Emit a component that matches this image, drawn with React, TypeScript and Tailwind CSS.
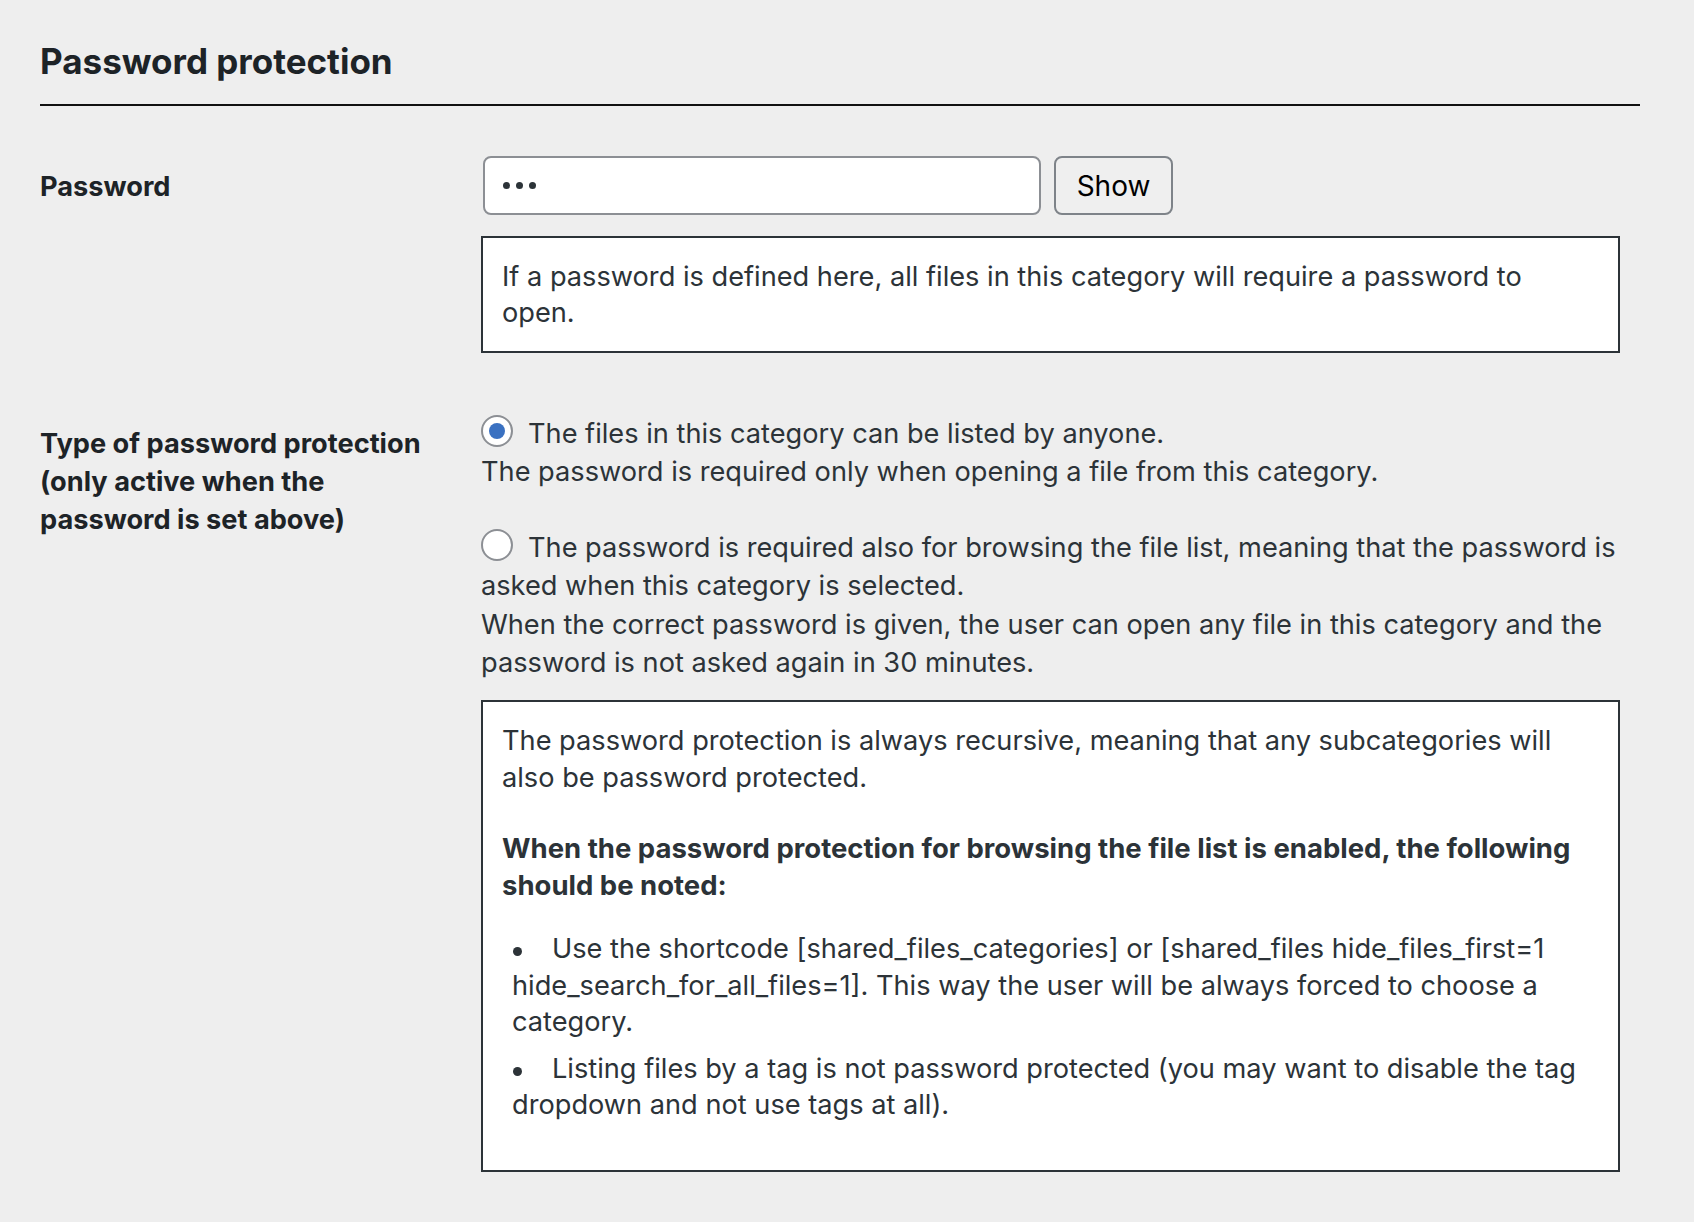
import React from "react";

function Radio({ checked }: { checked?: boolean }) {
  return (
    <span className="relative mr-[15px] inline-block size-[32px] rounded-full border-2 border-[#8c8f94] bg-white align-[-4px]">
      {checked && (
        <span className="absolute left-1/2 top-1/2 size-[16px] -translate-x-1/2 -translate-y-1/2 rounded-full bg-[#3a71c1]" />
      )}
    </span>
  );
}

function Line({ children }: { children: React.ReactNode }) {
  return <span className="block whitespace-nowrap">{children}</span>;
}

function Bullet() {
  return (
    <span className="inline-block w-[40px]">
      <span className="ml-[1px] inline-block size-[9px] rounded-full bg-[#2c3338] align-[2px]" />
    </span>
  );
}

export default function App() {
  return (
    <div className="min-h-screen bg-[#eeeeee] font-['Inter',sans-serif] text-[#2c3338]">
      <div className="pl-[40px] pr-[54px] pt-[39px]">
        <h2 className="text-[35px] font-bold leading-[44px] text-[#1d2327]">Password protection</h2>
        <div className="mt-[21px] h-[2px] bg-[#111111]" />

        <div className="mt-[50px] grid grid-cols-[441px_1139px]">
          <div className="pt-[13px] text-[27.2px] font-bold leading-[36.4px] text-[#1d2327]">Password</div>
          <div>
            <div className="flex items-center">
              <div className="ml-[2px] flex h-[59px] w-[558px] items-center gap-[6px] rounded-[8px] border-2 border-[#8c8f94] bg-white pl-[18px]">
                <span className="size-[7px] rounded-full bg-[#2c3338]" />
                <span className="size-[7px] rounded-full bg-[#2c3338]" />
                <span className="size-[7px] rounded-full bg-[#2c3338]" />
              </div>
              <button className="ml-[13px] h-[59px] w-[119px] rounded-[8px] border-2 border-[#7e8389] bg-[#efefef] text-[28px] leading-none text-black">
                Show
              </button>
            </div>
            <div className="mt-[21px] border-2 border-[#2c3338] bg-white px-[19px] pb-[19px] pt-[20.5px] text-[27.2px] leading-[36.5px]">
              <Line>If a password is defined here, all files in this category will require a password to</Line>
              <Line>open.</Line>
            </div>
          </div>
        </div>

        <div className="grid grid-cols-[441px_1139px]">
          <div className="pt-[72.5px] text-[27.2px] font-bold leading-[38px] text-[#1d2327]">
            <Line>Type of password protection</Line>
            <Line>(only active when the</Line>
            <Line>password is set above)</Line>
          </div>
          <div className="pt-[62px]">
            <div className="text-[27.2px] leading-[38px]">
              <Line>
                <Radio checked />
                The files in this category can be listed by anyone.
              </Line>
              <Line>The password is required only when opening a file from this category.</Line>
            </div>
            <div className="mt-[38px] text-[27.2px] leading-[38.5px]">
              <Line>
                <Radio />
                The password is required also for browsing the file list, meaning that the password is
              </Line>
              <Line>asked when this category is selected.</Line>
              <Line>When the correct password is given, the user can open any file in this category and the</Line>
              <Line>password is not asked again in 30 minutes.</Line>
            </div>

            <div className="mt-[17.5px] h-[472px] border-2 border-[#2c3338] bg-white px-[19px] pt-[21px] text-[27.2px] leading-[36.5px]">
              <p>
                <Line>The password protection is always recursive, meaning that any subcategories will</Line>
                <Line>also be password protected.</Line>
              </p>
              <p className="mt-[34px] text-[27.5px] font-bold text-[#2c3338]">
                <Line>When the password protection for browsing the file list is enabled, the following</Line>
                <Line>should be noted:</Line>
              </p>
              <ul className="mt-[28px] pl-[10px]">
                <li>
                  <Line>
                    <Bullet />
                    Use the shortcode [shared_files_categories] or [shared_files hide_files_first=1
                  </Line>
                  <Line>hide_search_for_all_files=1]. This way the user will be always forced to choose a</Line>
                  <Line>category.</Line>
                </li>
                <li className="mt-[10px]">
                  <Line>
                    <Bullet />
                    Listing files by a tag is not password protected (you may want to disable the tag
                  </Line>
                  <Line>dropdown and not use tags at all).</Line>
                </li>
              </ul>
            </div>
          </div>
        </div>
      </div>
    </div>
  );
}
